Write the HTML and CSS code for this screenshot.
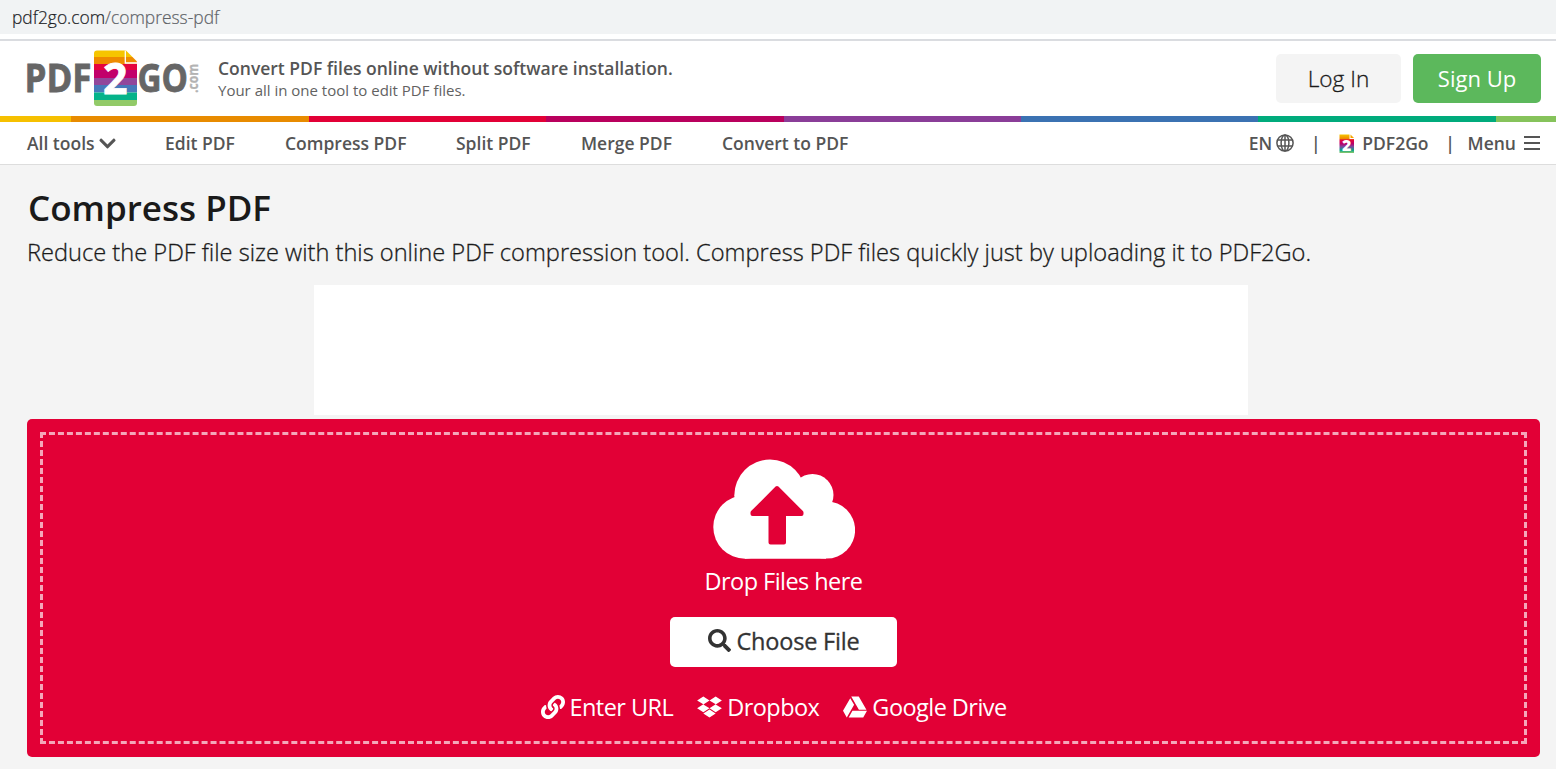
FILE: index.html
```html
<!DOCTYPE html>
<html lang="en">
<head>
    <meta charset="UTF-8">
    <meta name="viewport" content="width=device-width, initial-scale=1.0">
    <title>Compress PDF</title>
    <link rel="stylesheet" href="styles.css">
</head>
<body>
    <div class="address-bar"><span class="host">pdf2go.com</span><span>/compress-pdf</span></div>

    <header class="header">
        <svg class="logo" width="178" height="60" viewBox="25 48 178 60">
            <defs>
                <clipPath id="page"><path d="M97 50.5h29l11 11V103a3 3 0 0 1-3 3H97a3 3 0 0 1-3-3V53.500a3 3 0 0 1 3-3z"/></clipPath>
            </defs>
            <g clip-path="url(#page)">
                <rect x="94" y="50" width="43" height="7" fill="#f6c500"/>
                <rect x="94" y="57" width="43" height="7" fill="#ee8b00"/>
                <rect x="94" y="64" width="43" height="6" fill="#e5063d"/>
                <rect x="94" y="70" width="43" height="8" fill="#c2006b"/>
                <rect x="94" y="78" width="43" height="7" fill="#92479b"/>
                <rect x="94" y="85" width="43" height="7.500" fill="#4779ba"/>
                <rect x="94" y="92.500" width="43" height="7.500" fill="#05b38a"/>
                <rect x="94" y="100" width="43" height="6" fill="#92ca68"/>
                <path d="M125.300 50v13H137" fill="none" stroke="#fff" stroke-width="1.300"/>
            </g>
            <g class="logo-text">
                <text x="24.500" y="92.400" textLength="67" lengthAdjust="spacingAndGlyphs">PDF</text>
                <text x="137.500" y="92.400" textLength="50.500" lengthAdjust="spacingAndGlyphs">GO</text>
                <text class="two" x="103" y="93.500" textLength="24.500" lengthAdjust="spacingAndGlyphs">2</text>
                <text class="com" transform="translate(197.500 93) rotate(-90)" textLength="29" lengthAdjust="spacingAndGlyphs">.com</text>
            </g>
        </svg>
        <div class="slogan">
            <div class="slogan-title">Convert PDF files online without software installation.</div>
            <div class="slogan-sub">Your all in one tool to edit PDF files.</div>
        </div>
        <div class="account">
            <a class="btn login">Log In</a>
            <a class="btn signup">Sign Up</a>
        </div>
    </header>

    <div class="stripe"></div>

    <nav class="nav">
        <div class="nav-left">
            <a class="all-tools">All tools<svg width="17" height="19" viewBox="0 0 448 512"><path fill="currentColor" d="M207.029 381.476L12.686 187.132c-9.373-9.373-9.373-24.569 0-33.941l22.667-22.667c9.357-9.357 24.522-9.375 33.901-.04L224 284.505l154.745-154.021c9.379-9.335 24.544-9.317 33.901.04l22.667 22.667c9.373 9.373 9.373 24.569 0 33.941L240.971 381.476c-9.373 9.372-24.569 9.372-33.942 0z"/></svg></a>
            <a class="edit">Edit PDF</a>
            <a class="compress">Compress PDF</a>
            <a class="split">Split PDF</a>
            <a class="merge">Merge PDF</a>
            <a>Convert to PDF</a>
        </div>
        <div class="nav-right">
            <a class="lang">EN
                <svg width="18" height="18" viewBox="0 0 18 18" fill="none" stroke="currentColor" stroke-width="1.500">
                    <circle cx="9" cy="9" r="8.100"/>
                    <ellipse cx="9" cy="9" rx="3.900" ry="8.100"/>
                    <path d="M9 1v16M1.500 6h15M1.500 12h15"/>
                </svg>
            </a>
            <span class="sep">|</span>
            <a class="brand">
                <svg width="16" height="20" viewBox="0 0 16 20">
                    <defs>
                        <linearGradient id="rainbow" x2="0" y2="1">
                            <stop offset="0" stop-color="#f6c500"/>
                            <stop offset=".22" stop-color="#ee8b00"/>
                            <stop offset=".3" stop-color="#e5063d"/>
                            <stop offset=".5" stop-color="#b8006b"/>
                            <stop offset=".65" stop-color="#80459b"/>
                            <stop offset=".85" stop-color="#05a38a"/>
                            <stop offset="1" stop-color="#92ca68"/>
                        </linearGradient>
                    </defs>
                    <path fill="url(#rainbow)" d="M.5.5h10V5H15v14H.5z"/>
                    <path fill="#f6a500" d="M11.500.5L15 4h-3.500z"/>
                    <text class="mini-two" x="3" y="17">2</text>
                </svg>
                PDF2Go
            </a>
            <span class="sep sep-last">|</span>
            <a class="menu">Menu
                <svg width="16" height="16" viewBox="0 0 16 16"><path stroke="currentColor" stroke-width="2" d="M0 2h16M0 8h16M0 14h16"/></svg>
            </a>
        </div>
    </nav>

    <main class="main">
        <h1>Compress PDF</h1>
        <p class="intro">Reduce the PDF file size with this online PDF compression tool. Compress PDF files quickly just by uploading it to PDF2Go.</p>
        <div class="ad"></div>

        <div class="uploader">
            <div class="drop-area">
                <svg class="cloud" width="142" height="100" viewBox="713 459 142 100">
                    <g fill="#fff">
                        <circle cx="770" cy="495.300" r="35.700"/>
                        <circle cx="812.500" cy="495" r="21"/>
                        <circle cx="745" cy="527" r="31.700"/>
                        <circle cx="826.500" cy="530" r="28.600"/>
                        <path d="M745 500h81v58.650h-81z"/>
                    </g>
                    <path fill="#e20036" stroke="#e20036" stroke-width="4" stroke-linejoin="round" d="M777 488l24.500 24.500v1.500H784v28.500h-13.500V514H752.500v-1.500z"/>
                </svg>
                <div class="drop-label">Drop Files here</div>
                <button class="choose">
                    <svg width="23" height="23" viewBox="0 0 512 512"><path fill="currentColor" d="M505 442.700L405.300 343c-4.500-4.500-10.600-7-17-7H372c27.600-35.300 44-79.700 44-128C416 93.100 322.900 0 208 0S0 93.100 0 208s93.100 208 208 208c48.300 0 92.700-16.400 128-44v16.300c0 6.400 2.500 12.500 7 17l99.700 99.700c9.400 9.400 24.600 9.400 33.900 0l28.300-28.300c9.400-9.400 9.400-24.600.1-34zM208 336c-70.700 0-128-57.200-128-128 0-70.700 57.200-128 128-128 70.700 0 128 57.200 128 128 0 70.700-57.200 128-128 128z"/></svg>
                    <span>Choose File</span>
                </button>
                <div class="sources">
                    <a class="url">
                        <svg width="24" height="24" viewBox="0 0 512 512"><path fill="currentColor" d="M326.612 185.391c59.747 59.809 58.927 155.698.36 214.590-.11.12-.24.25-.36.37l-67.200 67.200c-59.270 59.270-155.699 59.262-214.960 0-59.270-59.260-59.270-155.700 0-214.960l37.106-37.106c9.840-9.840 26.786-3.300 27.294 10.606.648 17.722 3.826 35.527 9.690 52.721 1.986 5.822.567 12.262-3.783 16.612l-13.087 13.087c-28.026 28.026-28.905 73.660-1.155 101.960 28.024 28.579 74.086 28.749 102.325.51l67.200-67.190c28.191-28.191 28.073-73.757 0-101.830-3.701-3.694-7.429-6.564-10.341-8.569a16.037 16.037 0 0 1-6.947-12.606c-.396-10.567 3.348-21.456 11.698-29.806l21.054-21.055c5.521-5.521 14.182-6.199 20.584-1.731a152.482 152.482 0 0 1 20.522 17.197zM467.547 44.449c-59.261-59.262-155.690-59.270-214.960 0l-67.200 67.200c-.12.12-.25.25-.36.37-58.566 58.892-59.387 154.781.36 214.590a152.454 152.454 0 0 0 20.521 17.196c6.402 4.468 15.064 3.789 20.584-1.731l21.054-21.055c8.350-8.350 12.094-19.239 11.698-29.806a16.037 16.037 0 0 0-6.947-12.606c-2.912-2.005-6.640-4.875-10.341-8.569-28.073-28.073-28.191-73.639 0-101.830l67.200-67.190c28.239-28.239 74.300-28.069 102.325.51 27.750 28.300 26.872 73.934-1.155 101.960l-13.087 13.087c-4.350 4.350-5.769 10.790-3.783 16.612 5.864 17.194 9.042 34.999 9.690 52.721.509 13.906 17.454 20.446 27.294 10.606l37.106-37.106c59.271-59.259 59.271-155.699.001-214.959z"/></svg>
                        <span>Enter URL</span>
                    </a>
                    <a class="dropbox">
                        <svg width="25" height="24" viewBox="0 0 528 512"><path fill="currentColor" d="M264.400 116.300l-132 84.300 132 84.300-132 84.300L0 284.100l132.300-84.300L0 116.300 132.300 32l132.100 84.300zM131.600 395.700l132-84.300 132 84.300-132 84.300-132-84.300zm132.800-111.600l132-84.300-132-83.600L395.700 32 528 116.300l-132.300 84.300L528 284.800l-132.300 84.300-131.300-85z"/></svg>
                        <span>Dropbox</span>
                    </a>
                    <a class="drive">
                        <svg width="24" height="24" viewBox="0 0 512 512"><path fill="currentColor" d="M339 314.900L175.400 32h161.200l163.600 282.900H339zm-137.500 23.600L120.900 480h310.500L512 338.500H201.500zM154.100 67.400L0 338.500 80.600 480 237 208.800 154.100 67.400z"/></svg>
                        <span>Google Drive</span>
                    </a>
                </div>
            </div>
        </div>
    </main>
</body>
</html>
```
FILE: styles.css
```css
* {
    box-sizing: border-box;
}
body {
    margin: 0;
    height: 769px;
    overflow: hidden;
    background: #f4f4f4;
    color: #555;
    font-family: "Open Sans", sans-serif;
}
svg {
    flex-shrink: 0;
}
a, button, .slogan-title, .slogan-sub {
    white-space: nowrap;
}
.address-bar {
    height: 34px;
    padding-left: 12px;
    background: #f1f3f4;
    color: #5f6368;
    font-size: 17.4px;
    font-weight: 300;
    line-height: 34px;
    -webkit-text-stroke: 0.2px;
}
.address-bar .host {
    color: #202124;
}
.header {
    display: flex;
    align-items: flex-start;
    height: 82px;
    padding: 0 15px 0 25px;
    border-top: 5px solid #fff;
    background: #fff;
    box-shadow: inset 0 2px #dadce0;
}
.logo {
    margin-top: 9px;
}
.logo-text {
    fill: #666;
    stroke: #666;
    stroke-width: 0.8px;
    font-size: 40px;
    font-weight: 700;
}
.logo-text .two {
    fill: #fff;
    stroke: #fff;
    font-size: 43px;
}
.logo-text .com {
    fill: #b3b3b3;
    stroke: #b3b3b3;
    stroke-width: 0.3px;
    font-size: 14px;
}
.slogan {
    margin: 17px 0 0 15px;
}
.slogan-title {
    font-size: 17.5px;
    font-weight: 600;
    line-height: 24px;
}
.slogan-sub {
    color: #626262;
    font-size: 15px;
    line-height: 20px;
}
.account {
    display: flex;
    gap: 12px;
    margin: 15px 0 0 auto;
}
.btn {
    height: 49px;
    border-radius: 5px;
    font-size: 22px;
    line-height: 49px;
    text-align: center;
}
.login {
    width: 125px;
    background: #f4f4f4;
    color: #1a1a1a;
    font-size: 22.6px;
    font-weight: 300;
    -webkit-text-stroke: 0.3px;
}
.signup {
    width: 128px;
    background: #5cb85c;
    color: #fff;
}
.stripe {
    height: 6px;
    background: linear-gradient(90deg, #f6c000 71px, #e88b00 71px 309px, #e20036 309px 546px, #b9005d 546px 784px, #8a3d98 784px 1021px, #3b72b2 1021px 1258px, #00ab7c 1258px 1496px, #86c35b 1496px);
}
.nav {
    display: flex;
    justify-content: space-between;
    height: 43px;
    padding: 0 16px 0 27px;
    border-bottom: 1px solid #ddd;
    background: #fff;
    font-size: 17.5px;
    font-weight: 600;
    line-height: 42px;
}
.nav-left, .nav-right, .nav-right a, .all-tools {
    display: flex;
    align-items: center;
}
.all-tools {
    gap: 4px;
    width: 138px;
}
.edit {
    width: 120px;
}
.compress {
    width: 171px;
}
.split {
    width: 125px;
}
.merge {
    width: 141px;
}
.lang {
    gap: 4px;
}
.sep {
    width: 45px;
    padding-right: 2px;
    text-align: center;
}
.sep-last {
    width: 39px;
    padding: 0 0 0 4px;
}
.brand {
    gap: 7px;
}
.brand svg {
    margin-top: 2px;
}
.menu {
    gap: 8px;
}
.mini-two {
    fill: #fff;
    font-size: 16px;
    font-weight: 800;
}
.main {
    padding: 20px 16px 0 27px;
}
h1 {
    margin: 0 0 0 1px;
    color: #1a1a1a;
    font-size: 35px;
    font-weight: 600;
    line-height: 46px;
}
.intro {
    margin: 4px 0 0;
    color: #1a1a1a;
    font-size: 23.63px;
    font-weight: 300;
    line-height: 34px;
    white-space: nowrap;
    -webkit-text-stroke: 0.3px;
}
.ad {
    width: 934px;
    height: 130px;
    margin: 16px 0 0 287px;
    background: #fff;
}
.uploader {
    height: 338px;
    margin-top: 4px;
    padding: 13px;
    border-radius: 5px;
    background: #e20036;
}
.drop-area {
    display: flex;
    flex-direction: column;
    align-items: center;
    height: 312px;
    padding-top: 24px;
    border: 3px dashed rgba(255, 255, 255, 0.65);
    color: #fff;
    font-size: 23.5px;
    letter-spacing: -0.55px;
}
.drop-label {
    margin-top: 6px;
    line-height: 32px;
}
.choose {
    display: flex;
    justify-content: center;
    align-items: center;
    gap: 6px;
    width: 227px;
    height: 50px;
    margin-top: 20px;
    padding: 0 0 3px;
    border: none;
    border-radius: 5px;
    background: #fff;
    color: #333;
    font: 500 23.5px "Open Sans", sans-serif;
    letter-spacing: -0.2px;
    -webkit-text-stroke: 0.3px #333;
}
.sources {
    display: flex;
    gap: 24px;
    width: 486px;
    margin-top: 24px;
    line-height: 32px;
}
.sources a {
    display: flex;
    align-items: center;
    gap: 5px;
}
```
